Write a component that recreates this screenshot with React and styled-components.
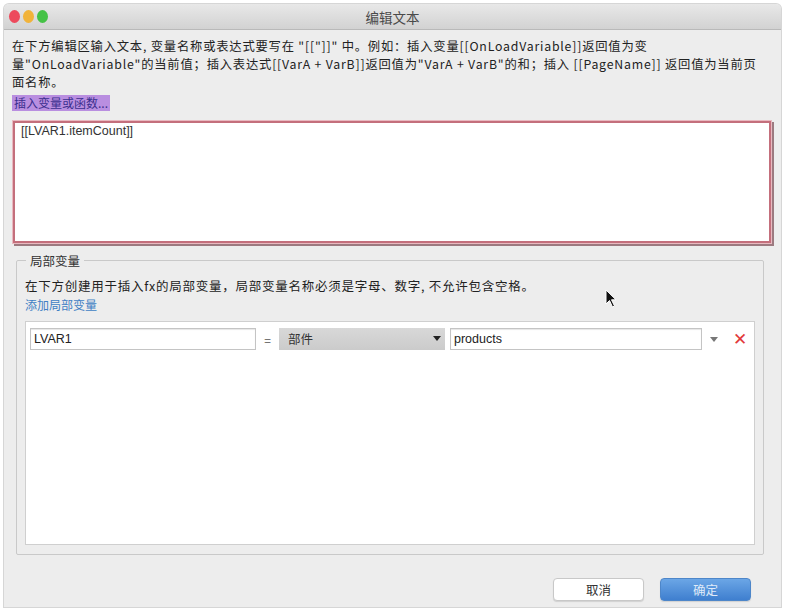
import React from 'react';
import styled, { createGlobalStyle } from 'styled-components';

const Global = createGlobalStyle`
  html, body { margin: 0; padding: 0; background: #fff; }
  body { font-family: "Noto Sans CJK SC", "Liberation Sans", sans-serif; }
`;

const Page = styled.div`
  width: 787px;
  height: 612px;
  padding: 4px 6px 5px 4px;
  box-sizing: border-box;
`;

const Window = styled.div`
  position: relative;
  height: 100%;
  display: flex;
  flex-direction: column;
  background: #ededed;
  border-radius: 5px 5px 0 0;
  overflow: hidden;
  box-shadow: 0 0 0 1px #d6d6d6;
`;

const TitleBar = styled.div`
  position: relative;
  height: 25px;
  flex: 0 0 25px;
  display: flex;
  align-items: center;
  justify-content: center;
  background: linear-gradient(#e8e8e8, #d2d2d2);
  border-bottom: 1px solid #b9b9b9;
  color: #4a4a4a;
  font-size: 13.5px;
`;

const Lights = styled.div`
  position: absolute;
  left: 5px;
  top: 6px;
  display: flex;
  gap: 3px;
`;

const Light = styled.span`
  width: 11px;
  height: 13px;
  border-radius: 50%;
  background: ${({ c }) => c};
`;

const Body = styled.div`
  flex: 1;
  display: flex;
  flex-direction: column;
  padding: 7px 10px 0 8px;
`;

const Intro = styled.p`
  margin: 0;
  font-size: 12.3px;
  line-height: 18px;
  color: #222;
  letter-spacing: 0.8px;
  white-space: nowrap;
`;

const InsertLink = styled.span`
  align-self: flex-start;
  margin-top: 4px;
  padding: 0 2px;
  height: 16px;
  line-height: 16px;
  font-size: 12px;
  color: #3b2f8f;
  background: #b98ee0;
`;

const Editor = styled.div`
  margin: 10px 0 0 1px;
  height: 116px;
  background: #fff;
  border: 2px solid #c46f7c;
  box-shadow: 0 0 0 1px #e9b9c0, 2px 2px 0 1px #9c7a80;
  padding: 1px 6px;
  font-family: "Liberation Sans", sans-serif;
  font-size: 12.5px;
  color: #333;
`;

const Fieldset = styled.fieldset`
  margin: 8px 7px 0 4px;
  padding: 7px 8px 9px 8px;
  border: 1px solid #c9c9c9;
  border-radius: 2px;
`;

const Legend = styled.legend`
  padding: 0 4px;
  margin-left: 1px;
  font-size: 12.5px;
  color: #333;
`;

const Hint = styled.div`
  font-size: 12.5px;
  letter-spacing: 0.75px;
  color: #222;
  line-height: 17px;
`;

const AddLink = styled.div`
  font-size: 12px;
  color: #3f7fc4;
  line-height: 17px;
  margin-top: 2px;
`;

const ListBox = styled.div`
  height: 224px;
  box-sizing: border-box;
  margin-top: 8px;
  background: #fff;
  border: 1px solid #cfcfcf;
  padding: 5px 4px;
`;

const Row = styled.div`
  display: flex;
  align-items: center;
  height: 24px;
`;

const Input = styled.div`
  width: ${({ w }) => w}px;
  height: 22px;
  box-sizing: border-box;
  border: 1px solid #c4c4c4;
  box-shadow: inset 0 1px 1px #e6e6e6;
  padding: 3px 3px 0;
  font-family: "Liberation Sans", sans-serif;
  font-size: 12.5px;
  color: #222;
`;

const Eq = styled.span`
  width: 23px;
  text-align: center;
  font-size: 12px;
  color: #555;
`;

const Select = styled.div`
  width: 166px;
  height: 22px;
  box-sizing: border-box;
  display: flex;
  align-items: center;
  justify-content: space-between;
  padding: 0 4px 2px 9px;
  background: linear-gradient(#d8d8d8, #cbcbcb);
  font-size: 12.5px;
  color: #333;
  margin-right: 5px;
`;

const Caret = styled.span`
  width: 0;
  height: 0;
  border-left: 4px solid transparent;
  border-right: 4px solid transparent;
  border-top: 5px solid ${({ c }) => c};
`;

const ComboCaret = styled(Caret)`
  margin: 0 15px 0 8px;
`;

const Remove = styled.span`
  color: #e2393a;
  font-family: "DejaVu Sans", sans-serif;
  font-size: 17px;
  font-weight: bold;
  line-height: 1;
`;

const Footer = styled.div`
  flex: 1;
  display: flex;
  justify-content: flex-end;
  align-items: center;
  gap: 16px;
  padding: 16px 20px 0 0;
`;

const Button = styled.button`
  width: 91px;
  height: 23px;
  border-radius: 4px;
  font-family: "Noto Sans CJK SC", sans-serif;
  font-size: 12.5px;
  border: 1px solid ${({ primary }) => (primary ? '#4d86c9' : '#c8c8c8')};
  color: ${({ primary }) => (primary ? '#dfeaf8' : '#333')};
  background: ${({ primary }) =>
    primary ? 'linear-gradient(#6ba6e6, #3f7fcf)' : '#fff'};
  box-shadow: 0 1px 1px rgba(0, 0, 0, 0.12);
`;

const Pointer = styled.svg`
  position: absolute;
  left: 601px;
  top: 285px;
`;

export default function App() {
  return (
    <>
      <Global />
      <Page>
        <Window>
          <TitleBar>
            <Lights>
              <Light c="#ed4a5c" />
              <Light c="#f1b33a" />
              <Light c="#45c246" />
            </Lights>
            编辑文本
          </TitleBar>
          <Body>
            <Intro>
              在下方编辑区输入文本, 变量名称或表达式要写在 "[["]]" 中。例如：插入变量[[OnLoadVariable]]返回值为变
              <br />
              量"OnLoadVariable"的当前值；插入表达式[[VarA + VarB]]返回值为"VarA + VarB"的和；插入 [[PageName]] 返回值为当前页
              <br />
              面名称。
            </Intro>
            <InsertLink>插入变量或函数...</InsertLink>
            <Editor>[[LVAR1.itemCount]]</Editor>
            <Fieldset>
              <Legend>局部变量</Legend>
              <Hint>在下方创建用于插入fx的局部变量，局部变量名称必须是字母、数字, 不允许包含空格。</Hint>
              <AddLink>添加局部变量</AddLink>
              <ListBox>
                <Row>
                  <Input w={226}>LVAR1</Input>
                  <Eq>=</Eq>
                  <Select>
                    部件
                    <Caret c="#222" />
                  </Select>
                  <Input w={252}>products</Input>
                  <ComboCaret c="#777" />
                  <Remove>✕</Remove>
                </Row>
              </ListBox>
            </Fieldset>
            <Footer>
              <Button>取消</Button>
              <Button primary>确定</Button>
            </Footer>
          </Body>
          <Pointer width="14" height="20" viewBox="0 0 14 20">
            <path d="M1 1 L1 15 L4.5 11.5 L7.5 18 L9.5 17 L6.5 10.8 L11 10.8 Z" fill="#111" stroke="#fff" strokeWidth="1" />
          </Pointer>
        </Window>
      </Page>
    </>
  );
}
